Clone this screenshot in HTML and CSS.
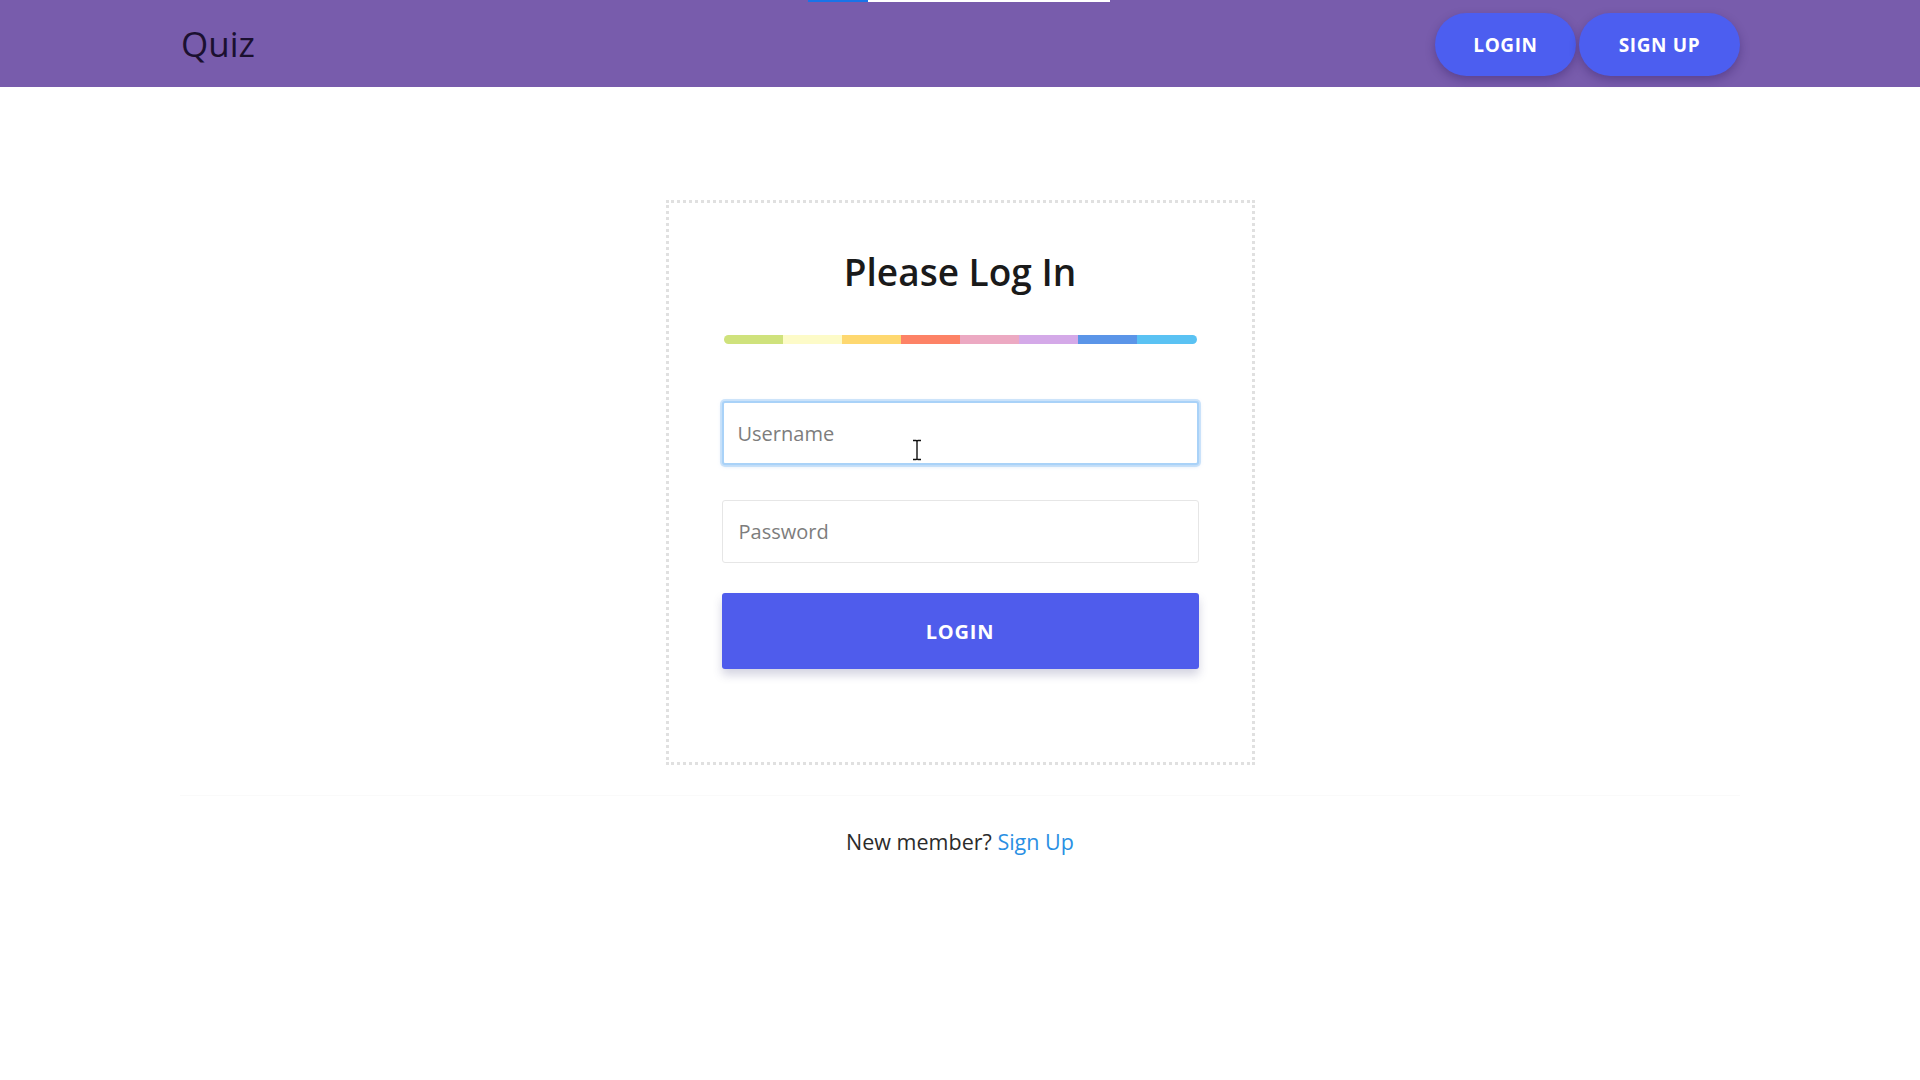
FILE: index.html
```html
<!DOCTYPE html>
<html lang="en">
<head>
<meta charset="utf-8">
<title>Quiz - Log In</title>
<link rel="stylesheet" href="styles.css">
</head>
<body>
<header class="topbar">
  <div class="loadbar"><span class="load-blue"></span><span class="load-white"></span></div>
  <div class="brand">Quiz</div>
  <nav class="nav">
    <a class="pill" href="#">LOGIN</a>
    <a class="pill" href="#">SIGN UP</a>
  </nav>
</header>
<main class="main">
  <section class="card">
    <h1 class="title">Please Log In</h1>
    <div class="rainbow">
      <span class="seg s1"></span><span class="seg s2"></span><span class="seg s3"></span><span class="seg s4"></span><span class="seg s5"></span><span class="seg s6"></span><span class="seg s7"></span><span class="seg s8"></span>
    </div>
    <div class="field-wrap">
      <input class="field focused" type="text" placeholder="Username">
      <svg class="ibeam" width="10" height="22" viewBox="0 0 10 22"><path d="M1 1.5h3.2M5.8 1.5H9M5 2v18M1 20.5h3.2M5.8 20.5H9M4.2 1.5Q5 1.8 5 2.5M5.8 1.5Q5 1.8 5 2.5M4.2 20.5Q5 20.2 5 19.5M5.8 20.5Q5 20.2 5 19.5" stroke="#111" stroke-width="1.4" fill="none"/></svg>
    </div>
    <input class="field" type="password" placeholder="Password">
    <button class="submit" type="button">LOGIN</button>
  </section>
  <div class="divider"></div>
  <p class="signup">New member? <a href="#">Sign Up</a></p>
</main>
</body>
</html>
```
FILE: styles.css
```css
* { box-sizing: border-box; }
html, body { margin: 0; padding: 0; background: #fff; }
body { font-family: "Open Sans", "Noto Sans", "DejaVu Sans", sans-serif; color: #222; }

.topbar {
  position: relative;
  height: 87px;
  background: #785cac;
  display: flex;
  align-items: center;
  justify-content: space-between;
  padding: 0 180px 0 181px;
}
.loadbar { position: absolute; top: 0; left: 808px; display: flex; height: 2px; }
.load-blue { width: 60px; background: #1a73e8; }
.load-white { width: 242px; background: #fff; }

.brand { font-size: 35px; color: #1b1030; line-height: 1; margin-top: -1px; }
.nav { display: flex; gap: 3px; margin-top: 2px; }
.pill {
  display: flex; align-items: center; justify-content: center;
  height: 63px;
  border-radius: 32px;
  background: #4c5ef0;
  color: #fff;
  font-weight: 700;
  font-size: 19px;
  letter-spacing: 0.6px;
  text-decoration: none;
  box-shadow: 0 4px 10px rgba(40, 20, 90, 0.35);
}
.pill:first-child { width: 141px; }
.pill:last-child { width: 161px; }

.main { display: flex; flex-direction: column; align-items: center; }
.card {
  margin-top: 113px;
  width: 589px;
  height: 565px;
  border: 3px dotted #e0e0e0;
  padding: 43px 53px 0 53px;
  display: flex; flex-direction: column; align-items: stretch;
}
.title {
  margin: 0;
  text-align: center;
  font-size: 37px;
  font-weight: 600;
  line-height: 52px;
  color: #1a1a1a;
}
.rainbow { margin: 37px 2px 0 2px; height: 9px; display: flex; border-radius: 5px; overflow: hidden; }
.seg { flex: 1; }
.s1 { background: #cfe27c; }
.s2 { background: #fdfbc8; }
.s3 { background: #fed870; }
.s4 { background: #fd8266; }
.s5 { background: #eca9c2; }
.s6 { background: #d4a9e8; }
.s7 { background: #5b95e8; }
.s8 { background: #5ac2f3; }

.field-wrap { position: relative; margin-top: 57px; }
.field {
  display: block;
  width: 100%;
  height: 63px;
  border: 1px solid #e6e6e6;
  border-radius: 3px;
  padding: 0 16px;
  font-family: inherit;
  font-size: 20px;
  color: #333;
  background: #fff;
  outline: none;
}
.field::placeholder { color: #7d7d7d; }
.field.focused {
  height: 64px;
  border: 2px solid #a9d2f8;
  box-shadow: 0 0 0 2px rgba(169, 210, 248, 0.55), 0 1px 4px rgba(120, 170, 230, 0.4);
  padding: 0 14px;
}
.field-wrap + .field { margin-top: 35px; }
.ibeam { position: absolute; left: 190px; top: 38px; }

.submit {
  margin-top: 30px;
  height: 76px;
  border: none;
  border-radius: 3px;
  background: #4f5cec;
  color: #fff;
  font-family: inherit;
  font-weight: 700;
  font-size: 20px;
  letter-spacing: 0.8px;
  box-shadow: 0 6px 10px rgba(60, 60, 120, 0.22);
}

.divider { align-self: stretch; margin: 30px 180px 0; border-top: 1px solid #fafafa; }
.signup { margin: 31px 0 0; font-size: 21.5px; line-height: 30px; color: #2b2b2b; }
.signup a { color: #2a8fe3; text-decoration: none; }
```
